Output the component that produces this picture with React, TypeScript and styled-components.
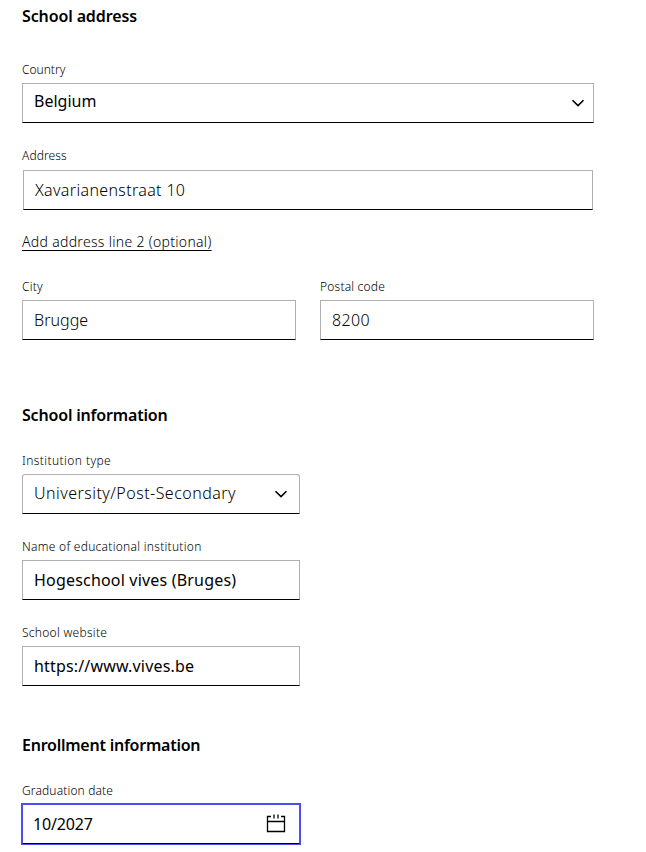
import React from 'react';
import styled, { createGlobalStyle, css } from 'styled-components';

const GlobalStyle = createGlobalStyle`
  * { box-sizing: border-box; }
  body {
    margin: 0;
    background: #fff;
    color: #000;
    font-family: "Noto Sans", "Open Sans", sans-serif;
  }
`;

const Form = styled.form`
  width: 594px;
  height: 852px;
  padding-left: 22px;
  overflow: hidden;
`;

const Section = styled.section<{ $top: number }>`
  display: flex;
  flex-direction: column;
  align-items: flex-start;
  padding-top: ${(p) => p.$top}px;
`;

const Heading = styled.h2<{ $gap: number; $track: number }>`
  margin: 0 0 ${(p) => p.$gap}px;
  font-size: 16px;
  line-height: 24px;
  font-weight: 600;
  letter-spacing: ${(p) => p.$track}px;
  white-space: nowrap;
`;

const FieldBlock = styled.div<{ $width: number; $top?: number }>`
  display: flex;
  flex-direction: column;
  width: ${(p) => p.$width}px;
  margin-top: ${(p) => p.$top ?? 0}px;
`;

const Label = styled.label<{ $track: number; $gap?: number }>`
  height: 18px;
  margin-bottom: ${(p) => p.$gap ?? 4}px;
  font-size: 12px;
  line-height: 18px;
  font-weight: 300;
  color: #000;
  letter-spacing: ${(p) => p.$track}px;
  white-space: nowrap;
`;

const Control = styled.div<{ $inset?: boolean; $rounded?: boolean; $focused?: boolean; $end?: number }>`
  display: flex;
  align-items: center;
  justify-content: space-between;
  height: 40px;
  margin: 0 ${(p) => (p.$inset ? 1 : 0)}px;
  padding: 0 ${(p) => p.$end ?? 8}px 0 ${(p) => (p.$focused ? 10 : 11)}px;
  border: 1px solid #b0b0b0;
  border-bottom-color: #000;
  background: #fff;
  ${(p) => p.$rounded && css`border-radius: 3px 3px 0 0;`}
  ${(p) =>
    p.$focused &&
    css`
      border-color: #4d4df5 #4d4df5 #000;
      box-shadow: 0 0 0 1px #4d4df5;
    `}
`;

const Value = styled.span<{ $light?: boolean; $lift?: number; $track: number }>`
  font-size: 16px;
  line-height: 24px;
  padding-bottom: ${(p) => p.$lift ?? 0}px;
  font-weight: ${(p) => (p.$light ? 300 : 400)};
  letter-spacing: ${(p) => p.$track}px;
  white-space: nowrap;
`;

const AddLine = styled.a<{ $track: number }>`
  margin-top: 22px;
  height: 20px;
  font-size: 14px;
  line-height: 20px;
  font-weight: 300;
  color: #000;
  letter-spacing: ${(p) => p.$track}px;
  text-decoration: underline;
  text-decoration-thickness: 1px;
  text-decoration-skip-ink: none;
  text-underline-offset: 3px;
  white-space: nowrap;
`;

const Row = styled.div`
  display: flex;
  gap: 24px;
  margin-top: 26px;
`;

const Icon = styled.svg`
  display: block;
  flex: none;
  fill: none;
  stroke: #000;
`;

const Chevron = () => (
  <Icon width="14" height="8" viewBox="0 0 14 8" strokeWidth="1.6">
    <path d="M1.5 1.2 7 6.6 12.5 1.2" />
  </Icon>
);

const Calendar = () => (
  <Icon width="20" height="20" viewBox="0 0 20 20" strokeWidth="1.3">
    <path d="M5 2.5H1.5V17.5H18.5V2.5H15M1.5 7.5H18.5M8 0.5V4.5M12 0.5V4.5" />
  </Icon>
);

export default function App() {
  return (
    <>
      <GlobalStyle />
      <Form>
        <Section $top={4}>
          <Heading $gap={33} $track={-0.12}>School address</Heading>
          <FieldBlock $width={572}>
            <Label $track={0}>Country</Label>
            <Control>
              <Value $lift={4} $track={0}>Belgium</Value>
              <Chevron />
            </Control>
          </FieldBlock>
          <FieldBlock $width={572} $top={24}>
            <Label $gap={5} $track={0.1}>Address</Label>
            <Control $inset>
              <Value $light $track={0.34}>Xavarianenstraat 10</Value>
            </Control>
          </FieldBlock>
          <AddLine $track={0.31}>Add address line 2 (optional)</AddLine>
          <Row>
            <FieldBlock $width={274}>
              <Label $track={0.2}>City</Label>
              <Control>
                <Value $light $track={0.05}>Brugge</Value>
              </Control>
            </FieldBlock>
            <FieldBlock $width={274}>
              <Label $track={0.2}>Postal code</Label>
              <Control>
                <Value $light $track={0.4}>8200</Value>
              </Control>
            </FieldBlock>
          </Row>
        </Section>
        <Section $top={63}>
          <Heading $gap={25} $track={-0.18}>School information</Heading>
          <FieldBlock $width={278}>
            <Label $track={0.42}>Institution type</Label>
            <Control $rounded $end={11}>
              <Value $light $lift={2} $track={0.47}>University/Post-Secondary</Value>
              <Chevron />
            </Control>
          </FieldBlock>
          <FieldBlock $width={278} $top={24}>
            <Label $track={0.28}>Name of educational institution</Label>
            <Control>
              <Value $track={0.19}>Hogeschool vives (Bruges)</Value>
            </Control>
          </FieldBlock>
          <FieldBlock $width={278} $top={24}>
            <Label $track={0.28}>School website</Label>
            <Control>
              <Value $track={0.17}>https://www.vives.be</Value>
            </Control>
          </FieldBlock>
        </Section>
        <Section $top={47}>
          <Heading $gap={25} $track={-0.24}>Enrollment information</Heading>
          <FieldBlock $width={278}>
            <Label $track={0.14}>Graduation date</Label>
            <Control $focused $end={13}>
              <Value $track={-0.15}>10/2027</Value>
              <Calendar />
            </Control>
          </FieldBlock>
        </Section>
      </Form>
    </>
  );
}
